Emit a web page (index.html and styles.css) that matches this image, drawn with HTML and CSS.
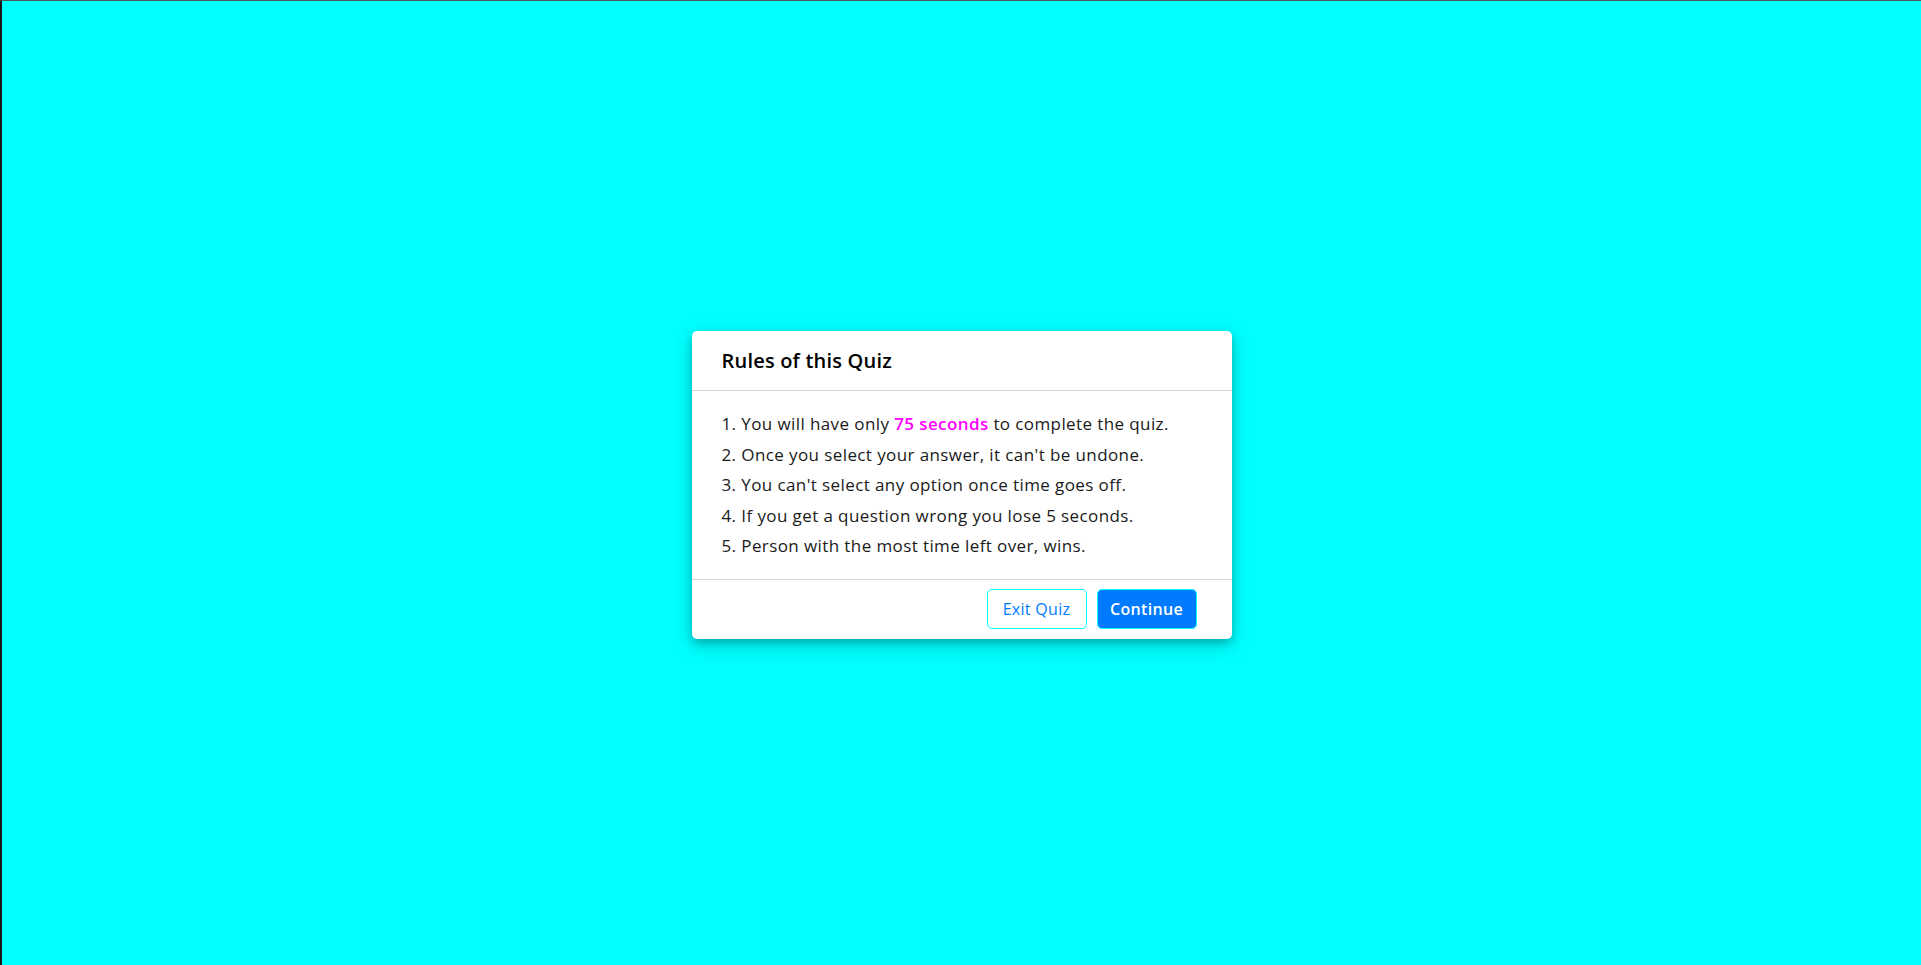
FILE: index.html
```html
<!DOCTYPE html>
<html lang="en">
<head>
<meta charset="UTF-8">
<title>Quiz</title>
<link rel="stylesheet" href="styles.css">
</head>
<body>
<div class="page">
  <div class="info-box">
    <div class="info-title"><span>Rules of this Quiz</span></div>
    <div class="info-list">
      <div class="info">1. You will have only <span class="hl">75 seconds</span> to complete the quiz.</div>
      <div class="info">2. Once you select your answer, it can't be undone.</div>
      <div class="info">3. You can't select any option once time goes off.</div>
      <div class="info">4. If you get a question wrong you lose 5 seconds.</div>
      <div class="info">5. Person with the most time left over, wins.</div>
    </div>
    <div class="buttons">
      <button class="btn quit">Exit Quiz</button>
      <button class="btn restart">Continue</button>
    </div>
  </div>
</div>
</body>
</html>
```
FILE: styles.css
```css
* {
  margin: 0;
  padding: 0;
  box-sizing: border-box;
}
html, body {
  height: 100%;
}
body {
  background: #00ffff;
  font-family: "Open Sans", "Noto Sans", sans-serif;
}
.page {
  height: 100%;
  border-top: 1px solid #555;
  border-left: 2px solid #1a1a1a;
  padding-top: 4px;
  display: flex;
  align-items: center;
  justify-content: center;
}
.info-box {
  width: 540px;
  background: #fff;
  border-radius: 5px;
  box-shadow: 0 4px 8px 0 rgba(0,0,0,0.2), 0 6px 20px 0 rgba(0,0,0,0.19);
}
.info-title {
  height: 60px;
  display: flex;
  align-items: center;
  padding: 0 30px;
  border-bottom: 1px solid lightgrey;
  font-size: 20px;
  font-weight: 600;
  letter-spacing: 0.2px;
  color: #000;
}
.info-list {
  padding: 15px 30px;
}
.info {
  margin: 5px 0;
  font-size: 17px;
  line-height: 25.5px;
  letter-spacing: 0.4px;
  color: #1a1a1a;
}
.hl {
  color: #ff00ff;
  font-weight: 600;
}
.buttons {
  height: 60px;
  display: flex;
  align-items: center;
  justify-content: flex-end;
  padding: 0 30px;
  border-top: 1px solid lightgrey;
}
.btn {
  margin: 0 5px;
  height: 40px;
  width: 100px;
  font-family: inherit;
  font-size: 16px;
  font-weight: 500;
  letter-spacing: 0.3px;
  border-radius: 5px;
  border: 1px solid #00ffff;
  cursor: pointer;
}
.quit {
  background: #fff;
  color: #007bff;
}
.restart {
  background: #007bff;
  color: #fff;
  font-weight: 600;
}
```
